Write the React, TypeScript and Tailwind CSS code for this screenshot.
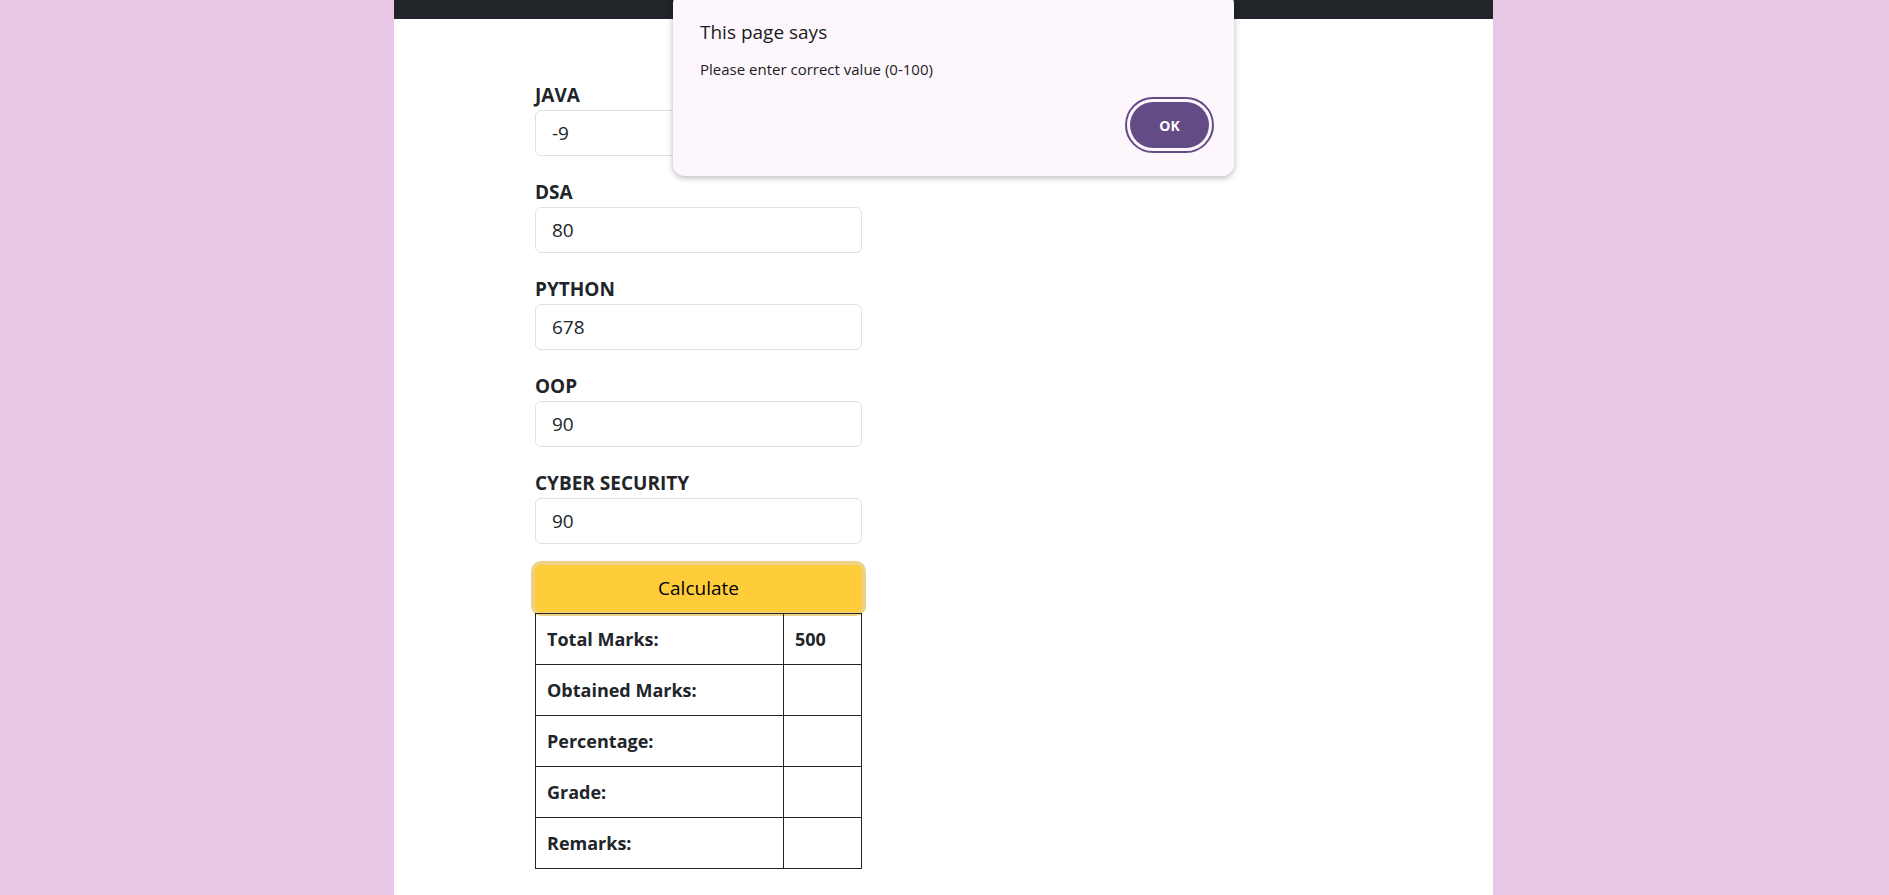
import React from "react";

const subjects = [
    { name: "JAVA", value: "-9" },
    { name: "DSA", value: "80" },
    { name: "PYTHON", value: "678" },
    { name: "OOP", value: "90" },
    { name: "CYBER SECURITY", value: "90" },
];

const results = [
    { label: "Total Marks:", value: "500" },
    { label: "Obtained Marks:", value: "" },
    { label: "Percentage:", value: "" },
    { label: "Grade:", value: "" },
    { label: "Remarks:", value: "" },
];

function AlertDialog () {
    return (
        <div className="absolute left-[673px] top-[-8px] w-[561px] rounded-[12px] bg-[#fdf7fd] shadow-[0_2px_6px_rgba(0,0,0,0.28)] pl-[27px] pr-[20px] pt-[28px] pb-[23px]">
            <h2 className="text-[19px] leading-[25px] font-medium text-[#1b1b1b]">This page says</h2>
            <p className="mt-[14px] text-[15px] leading-[20px] text-[#1b1b1b]">Please enter correct value (0-100)</p>
            <div className="mt-[18px] flex justify-end">
                <button className="h-[56px] w-[89px] rounded-full border-2 border-[#634b85] p-[3px]">
                    <span className="flex h-full w-full items-center justify-center rounded-full bg-[#634b85] text-[14px] font-bold text-white">OK</span>
                </button>
            </div>
        </div>
    );
}

export default function App () {
    return (
        <div className="relative min-h-[895px] bg-[#e7c6e6] font-['Open_Sans',sans-serif] text-[#212529]">
            <div className="ml-[394px] w-[1099px] min-h-[895px] bg-white">
                <div className="h-[19px] bg-[#212529]" />
                <div className="pl-[141px] pt-[64px]">
                    <div className="w-[327px]">
                        {
                            subjects.map((subject, index) => {
                                return (
                                    <div className="mb-[24px]" key={index}>
                                        <label className="block h-[24px] text-[19px] leading-[24px] font-bold">{subject.name}</label>
                                        <input
                                            type="text"
                                            defaultValue={subject.value}
                                            className="mt-[3px] block h-[46px] w-full rounded-[6px] border border-[#dee2e6] px-[16px] text-[19px] text-[#212529] outline-none"
                                        />
                                    </div>
                                );
                            })
                        }
                        <div className="-mt-[3px]">
                            <button className="block h-[47px] w-full rounded-[6px] bg-[#ffcd39] text-[19px] text-black shadow-[0_0_0_4px_#ecd282]">Calculate</button>
                        </div>
                        <table className="mt-[1px] w-full border-collapse">
                            <tbody>
                                {
                                    results.map((row, index) => {
                                        return (
                                            <tr className="h-[51px]" key={index}>
                                                <td className="w-[248px] border border-[#212529] px-[11px] text-[18px] font-bold">{row.label}</td>
                                                <td className="border border-[#212529] px-[11px] text-[18px] font-bold">{row.value}</td>
                                            </tr>
                                        );
                                    })
                                }
                            </tbody>
                        </table>
                    </div>
                </div>
            </div>
            <AlertDialog />
        </div>
    );
}
